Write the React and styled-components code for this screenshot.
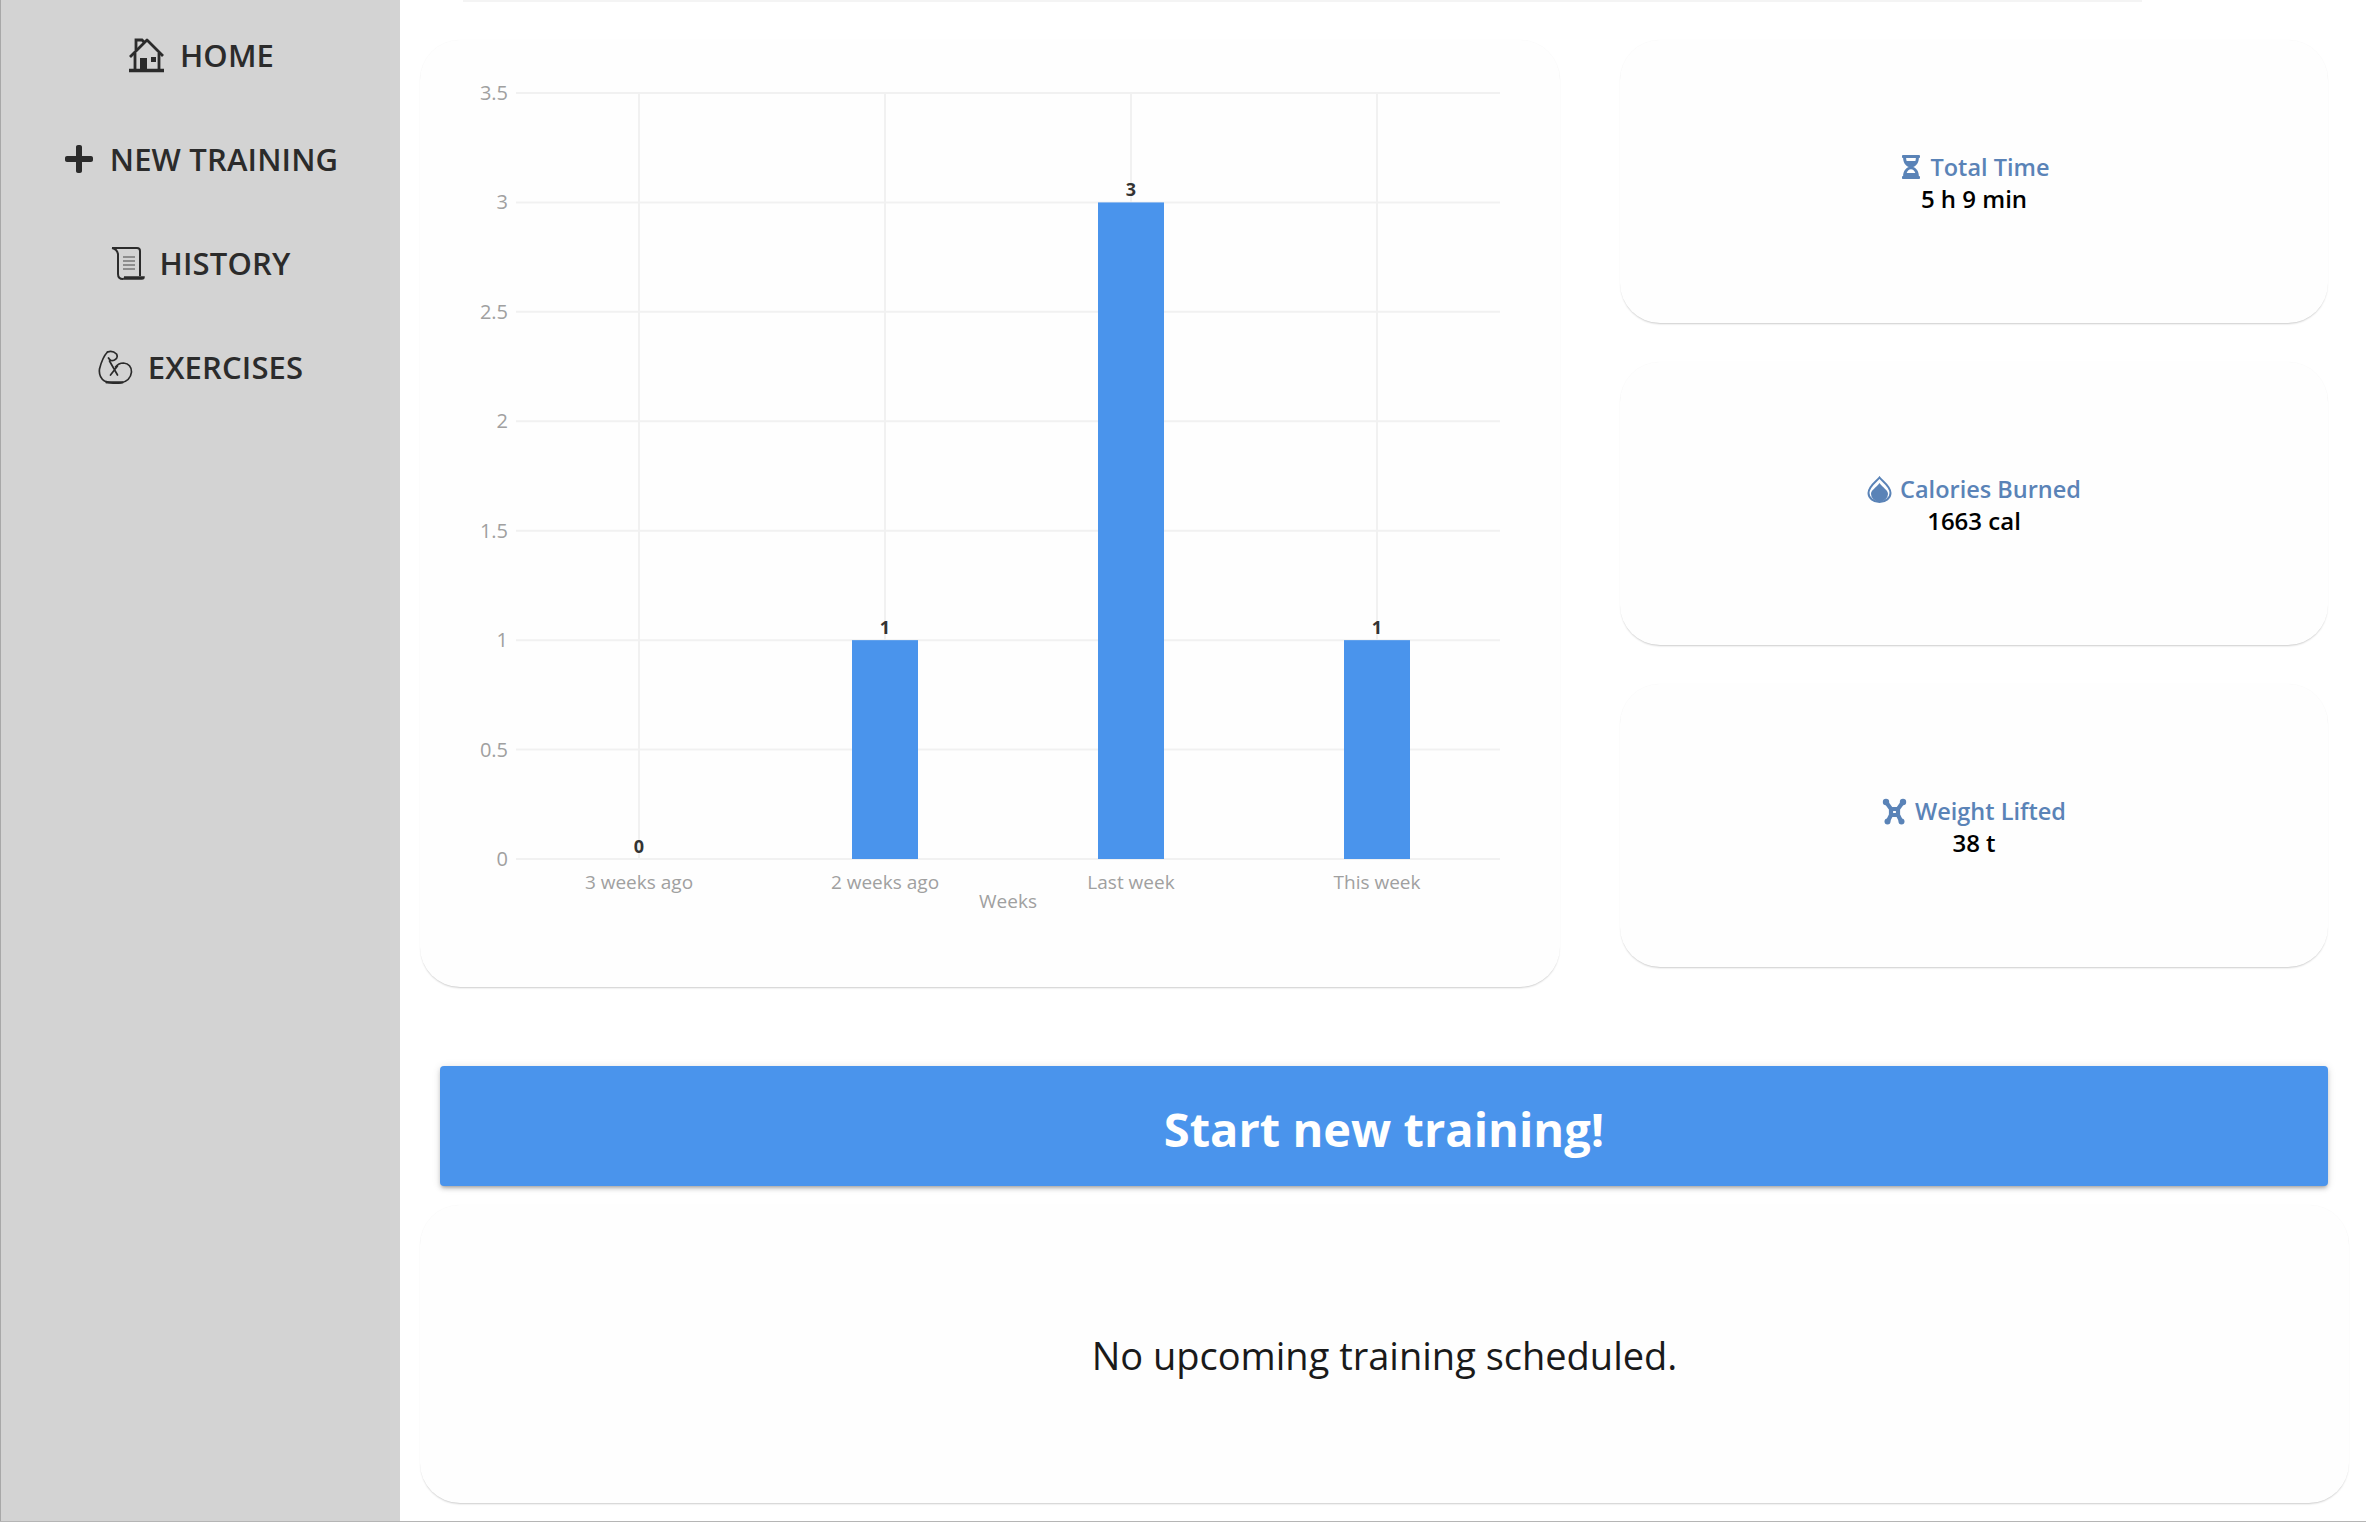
import { createGlobalStyle } from 'styled-components';
import styled from 'styled-components';
import { FaPlus, FaHourglassHalf } from 'react-icons/fa';

const GlobalStyle = createGlobalStyle`
    html, body {
        margin: 0;
        padding: 0;
        background: #fff;
        font-family: "Open Sans", "Noto Sans", sans-serif;
    }
`;

const HouseIcon = () => (
    <svg width="38" height="36" viewBox="0 0 38 36" fill="none" stroke="currentColor" strokeWidth="2.8">
        <path d="M3 20 L20 3 L36 19" strokeLinejoin="round" />
        <path d="M9 13 V3 H15 L17 5" />
        <path d="M8 16 V32 M32 16 V32" />
        <path d="M2 33.5 H37" strokeWidth="3.4" />
        <rect x="13" y="21" width="7" height="12" fill="currentColor" stroke="none" />
        <rect x="24" y="20" width="5" height="5" fill="currentColor" stroke="none" />
    </svg>
);

const ScrollIcon = () => (
    <svg width="34" height="35" viewBox="0 0 34 35" fill="none" stroke="currentColor" strokeWidth="2">
        <path d="M1 2 H26 Q29 2 29 5 V30" />
        <path d="M1 2 Q6 3 7 8 V28 Q7 33 12 33" />
        <path d="M12 33 H31 Q33 33 33 31 H13" fill="currentColor" strokeWidth="1.5" />
        <path d="M12 11 H24 M12 15 H24 M12 19 H24 M12 23 H24" stroke="#777" strokeWidth="1.6" />
    </svg>
);

const BicepIcon = () => (
    <svg width="35" height="34" viewBox="8 11 34 34" fill="none" stroke="currentColor" strokeWidth="1.7" strokeLinecap="round">
        <path d="M17 13 Q22 11 26 15 Q28 19 24 21 Q20 23 18 19" />
        <path d="M17 13 Q12 18 9 30 Q8 38 14 42 Q20 45 30 44 Q40 42 41 33 Q41 25 33 24 Q28 24 25 28" />
        <path d="M19 22 L27 36 M27 27 L20 36" />
        <path d="M16 43.4 H32" strokeWidth="2.2" />
    </svg>
);

const DropIcon = () => (
    <svg width="25" height="27" viewBox="0 0 25 27">
        <path d="M12.5 1.5 C9 6 1.5 10 1.5 17 A11 9 0 0 0 23.5 17 C23.5 10 16 6 12.5 1.5 Z" fill="none" stroke="currentColor" strokeWidth="2" />
        <path d="M12.5 7 C9 12 4 14 4 18 A8.5 7.5 0 0 0 21 18 C21 14 16 12 12.5 7 Z" fill="currentColor" />
    </svg>
);

const LifterIcon = () => (
    <svg width="25" height="27" viewBox="0 0 25 27" fill="currentColor" stroke="currentColor">
        <path d="M4 4 L9 11 H16 L21 4 M9 11 V17 H16 V11 M9 17 L6 23 M16 17 L19 23" fill="none" strokeWidth="4.2" />
        <circle cx="4" cy="4" r="3.2" stroke="none" />
        <circle cx="21" cy="4" r="3.2" stroke="none" />
        <circle cx="5.5" cy="23.5" r="3" stroke="none" />
        <circle cx="19.5" cy="23.5" r="3" stroke="none" />
    </svg>
);

const routes = [
    { title: 'HOME', icon: <HouseIcon /> },
    { title: 'NEW TRAINING', icon: <FaPlus size={32} /> },
    { title: 'HISTORY', icon: <ScrollIcon /> },
    { title: 'EXERCISES', icon: <BicepIcon /> },
];

const stats = [
    { title: 'Total Time', value: '5 h 9 min', icon: <FaHourglassHalf size={24} /> },
    { title: 'Calories Burned', value: '1663 cal', icon: <DropIcon /> },
    { title: 'Weight Lifted', value: '38 t', icon: <LifterIcon /> },
];

const weeks = [
    { label: '3 weeks ago', count: 0 },
    { label: '2 weeks ago', count: 1 },
    { label: 'Last week', count: 3 },
    { label: 'This week', count: 1 },
];

const ticks = [0, 0.5, 1, 1.5, 2, 2.5, 3, 3.5];

const Page = styled.div`
    display: flex;
    width: 2366px;
    height: 1522px;
    overflow: hidden;
    box-sizing: border-box;
    border-bottom: 1px solid #b5b5b5;
`;

const Sidebar = styled.nav`
    width: 400px;
    flex-shrink: 0;
    box-sizing: border-box;
    background: #d3d3d3;
    border-left: 1px solid #a8a8a8;
    padding-top: 3px;
    display: flex;
    flex-direction: column;
`;

const NavItem = styled.a`
    height: 104px;
    display: flex;
    align-items: center;
    justify-content: center;
    gap: 15px;
    color: #2b2b2b;
    font-size: 31px;
    font-weight: 600;
    letter-spacing: 0.15px;
`;

const Main = styled.main`
    flex: 1;
    min-width: 0;
    display: flex;
    flex-direction: column;
`;

const TopEdge = styled.div`
    height: 2px;
    margin: 0 224px 38px 63px;
    background: #f4f4f4;
`;

const TopRow = styled.div`
    display: flex;
    gap: 60px;
    margin: 0 38px 0 20px;
`;

const Card = styled.section`
    box-sizing: border-box;
    background: #fefefe;
    border-radius: 40px;
    box-shadow: 0 2px 2px -1px rgba(0, 0, 0, 0.2), 0 0 1px rgba(0, 0, 0, 0.05);
`;

const ChartCard = styled(Card)`
    width: 1140px;
    height: 947px;
    flex-shrink: 0;
`;

const StatColumn = styled.div`
    flex: 1;
    display: flex;
    flex-direction: column;
    gap: 39px;
`;

const StatCard = styled(Card)`
    height: 283px;
    display: flex;
    flex-direction: column;
    align-items: center;
    padding-top: 110px;
    text-align: center;
`;

const StatTitle = styled.div`
    display: flex;
    align-items: center;
    gap: 8px;
    height: 34px;
    color: #5a83b7;
    font-size: 23.5px;
    font-weight: 600;
`;

const StatValue = styled.div`
    color: #000;
    font-size: 24px;
    font-weight: 600;
    line-height: 30px;
`;

const StartButton = styled.button`
    margin: 79px 38px 0 40px;
    height: 120px;
    flex-shrink: 0;
    border: 0;
    padding: 5px 0 0;
    border-radius: 4px;
    background: #4a94ec;
    color: #fff;
    font-family: inherit;
    font-size: 47px;
    font-weight: 700;
    box-shadow: 0 3px 3px -2px rgba(0, 0, 0, 0.2), 0 3px 4px rgba(0, 0, 0, 0.14), 0 1px 8px rgba(0, 0, 0, 0.12);
`;

const UpcomingCard = styled(Card)`
    margin: 19px 17px 0 20px;
    height: 298px;
    padding-top: 2px;
    display: flex;
    align-items: center;
    justify-content: center;
    color: #1a1a1a;
    font-size: 38px;
`;

const ChartSvg = styled.svg`
    display: block;
    font-family: "Open Sans", "Noto Sans", sans-serif;
`;

// chart geometry, in card coordinates
const plotLeft = 96;
const plotRight = 1080;
const plotTop = 53;
const plotBottom = 819;
const band = (plotRight - plotLeft) / weeks.length;
const barWidth = 66;
const yFor = (v) => plotBottom - (v / 3.5) * (plotBottom - plotTop);

const WeekChart = () => (
    <ChartSvg width="1140" height="947" viewBox="0 0 1140 947">
        {ticks.map((t) => (
            <g key={t}>
                <line x1={plotLeft} x2={plotRight} y1={yFor(t)} y2={yFor(t)} stroke="#f1f1f1" strokeWidth="2" />
                <text x={plotLeft - 8} y={yFor(t) + 7} textAnchor="end" fontSize="20" fill="#a0a0a0">{t}</text>
            </g>
        ))}
        {weeks.map((w, i) => {
            const cx = plotLeft + band * (i + 0.5);
            return (
                <g key={w.label}>
                    <line x1={cx} x2={cx} y1={plotTop} y2={plotBottom} stroke="#f1f1f1" strokeWidth="2" />
                    {w.count > 0 && (
                        <rect x={cx - barWidth / 2} y={yFor(w.count)} width={barWidth} height={plotBottom - yFor(w.count)} fill="#4a94ec" />
                    )}
                    <text x={cx} y={yFor(w.count) - 6} textAnchor="middle" fontSize="18" fontWeight="700" fill="#333">{w.count}</text>
                    <text x={cx} y={849} textAnchor="middle" fontSize="19" fill="#a0a0a0">{w.label}</text>
                </g>
            );
        })}
        <text x="588" y="868" textAnchor="middle" fontSize="19" fill="#a0a0a0">Weeks</text>
    </ChartSvg>
);

const App = () => (
    <>
        <GlobalStyle />
        <Page>
            <Sidebar>
                {routes.map((route) => (
                    <NavItem key={route.title}>
                        {route.icon}
                        <span>{route.title}</span>
                    </NavItem>
                ))}
            </Sidebar>
            <Main>
                <TopEdge />
                <TopRow>
                    <ChartCard>
                        <WeekChart />
                    </ChartCard>
                    <StatColumn>
                        {stats.map((stat) => (
                            <StatCard key={stat.title}>
                                <StatTitle>
                                    {stat.icon}
                                    {stat.title}
                                </StatTitle>
                                <StatValue>{stat.value}</StatValue>
                            </StatCard>
                        ))}
                    </StatColumn>
                </TopRow>
                <StartButton>Start new training!</StartButton>
                <UpcomingCard>No upcoming training scheduled.</UpcomingCard>
            </Main>
        </Page>
    </>
);

export default App;
